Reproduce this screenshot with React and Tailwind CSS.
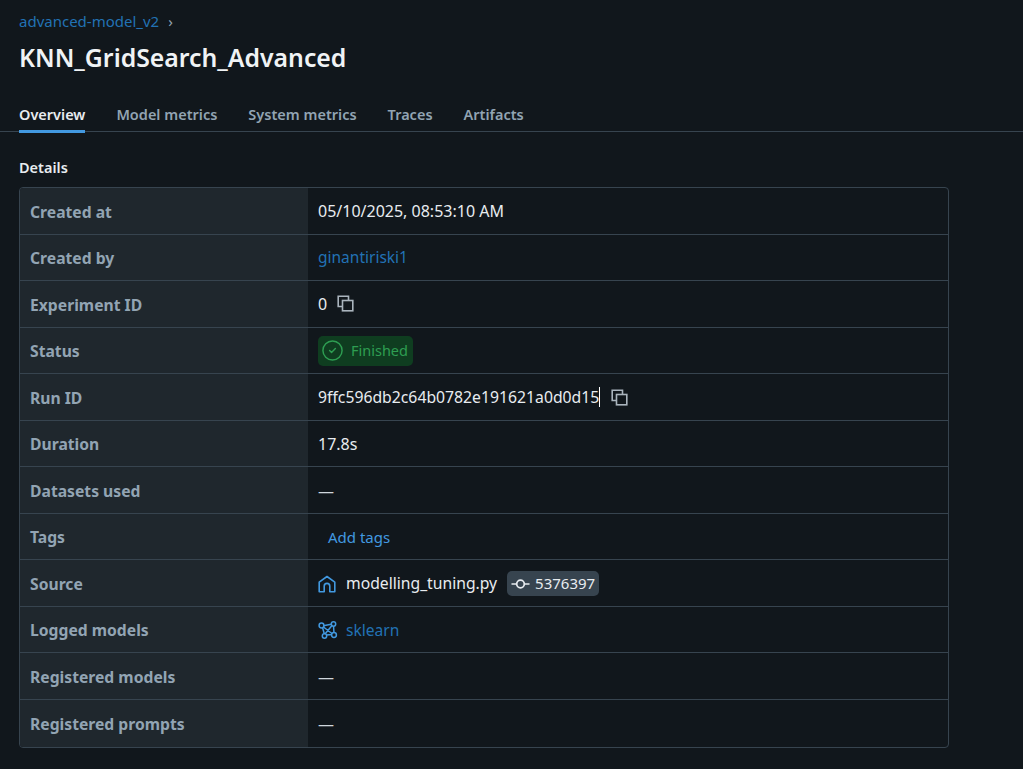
import { CircleCheck } from 'lucide-react'

const font = { fontFamily: '"Noto Sans", "Open Sans", sans-serif' }

function CopyIcon({ className }) {
  return (
    <svg viewBox="0 0 17 17" fill="none" stroke="#aab4bd" strokeWidth="1.6" className={className}>
      <path d="M5.5 11.5H1.2V1.2h10.3v4.3" />
      <rect x="5.5" y="5.5" width="10.3" height="10.3" />
    </svg>
  )
}

function HomeIcon() {
  return (
    <svg viewBox="0 0 18 18" fill="none" stroke="#4299e0" strokeWidth="1.6" className="w-[18px] h-[18px] shrink-0">
      <path d="M1.2 7.2 9 1.5l7.8 5.7v9.6h-5v-5.6a2.8 2.8 0 0 0-5.6 0v5.6h-5z" strokeLinejoin="round" />
    </svg>
  )
}

function CommitIcon() {
  return (
    <svg viewBox="0 0 20 14" fill="none" stroke="#e8ecf0" strokeWidth="1.8" className="w-[19px] h-[14px] shrink-0">
      <circle cx="10" cy="7" r="4" />
      <path d="M0.5 7H6M14 7h5.5" />
    </svg>
  )
}

function ModelIcon() {
  return (
    <svg viewBox="0 0 20 18" fill="none" stroke="#4299e0" strokeWidth="1.5" className="w-[20px] h-[18px] shrink-0">
      <path d="M4 5 14.5 3M4.5 6.5l2 7M5.5 6l9 7M15.5 4.5l.5 8M8 14l6.5-.5M7 13l7-8.5" />
      <circle cx="3.5" cy="4.5" r="2.4" fill="#11171c" />
      <circle cx="15.5" cy="3" r="2.2" fill="#11171c" />
      <circle cx="6.5" cy="15" r="2.2" fill="#11171c" />
      <circle cx="16" cy="14" r="2.4" fill="#11171c" />
    </svg>
  )
}

function Dash() {
  return <span className="mt-[1px] text-[#cfd6dc]">—</span>
}

const rows = [
  { label: 'Created at', value: <span>05/10/2025, 08:53:10 AM</span> },
  { label: 'Created by', value: <span className="text-[15.5px] text-[#2272b4]">ginantiriski1</span> },
  {
    label: 'Experiment ID',
    value: (
      <div className="flex items-center gap-[10px]">
        <span>0</span>
        <CopyIcon className="w-[17px] h-[17px] -mt-[2px]" />
      </div>
    ),
  },
  {
    label: 'Status',
    value: (
      <div className="flex items-center gap-[7px] h-[30px] pl-[3px] pr-[5px] rounded-[5px] bg-[#0f3d20] text-[#2e9e52]">
        <CircleCheck size={23} strokeWidth={1.5} />
        <span className="text-[14.5px]">Finished</span>
      </div>
    ),
  },
  {
    label: 'Run ID',
    value: (
      <div className="flex items-center gap-[11px]">
        <span className="text-[15.75px] border-r border-white leading-[20px]">9ffc596db2c64b0782e191621a0d0d15</span>
        <CopyIcon className="w-[17px] h-[17px]" />
      </div>
    ),
  },
  { label: 'Duration', value: <span>17.8s</span> },
  { label: 'Datasets used', value: <Dash /> },
  { label: 'Tags', value: <span className="pl-[10px] text-[15px] text-[#4299e0]">Add tags</span> },
  {
    label: 'Source',
    value: (
      <div className="flex items-center">
        <HomeIcon />
        <span className="ml-[10px] text-[15.7px]">modelling_tuning.py</span>
        <div className="ml-[10px] flex items-center gap-[5px] h-[25px] pl-[4px] pr-[4px] rounded-[5px] bg-[#37444f]">
          <CommitIcon />
          <span className="text-[15px]">5376397</span>
        </div>
      </div>
    ),
  },
  {
    label: 'Logged models',
    value: (
      <div className="flex items-center">
        <ModelIcon />
        <span className="ml-[8px] text-[15.6px] text-[#2272b4]">sklearn</span>
      </div>
    ),
  },
  { label: 'Registered models', value: <Dash /> },
  { label: 'Registered prompts', value: <Dash /> },
]

const tabs = ['Overview', 'Model metrics', 'System metrics', 'Traces', 'Artifacts']

export default function App() {
  return (
    <div className="h-[769px] overflow-hidden bg-[#11171c] text-[#e8ecf0]" style={font}>
      <div className="pl-[19px] pt-[10px]">
        <div className="flex items-center h-[22px] text-[15px] text-[#2272b4]">
          advanced-model_v2
          <span className="ml-[9px] text-[#92a4b3] text-[15px]">›</span>
        </div>
        <h1 className="mt-[7px] h-[36px] leading-[36px] text-[24.8px] font-semibold text-[#f0f3f5]">
          KNN_GridSearch_Advanced
        </h1>
      </div>

      <div className="mt-[25px] pl-[19px] flex gap-[31px] h-[32px] border-b border-[#37444f]">
        {tabs.map((tab, idx) => (
          <div
            key={tab}
            className={
              idx === 0
                ? 'h-[33px] leading-[28px] text-[14.5px] font-semibold text-[#e8ecf0] border-b-[3px] border-[#4299e0]'
                : 'h-[33px] leading-[28px] text-[14.5px] font-semibold text-[#92a4b3]'
            }
          >
            {tab}
          </div>
        ))}
      </div>

      <div className="pl-[19px] pt-[24px]">
        <h2 className="h-[22px] leading-[22px] text-[14.5px] font-semibold">Details</h2>
        <div className="mt-[9px] w-[930px] border border-[#37444f] rounded-[4px] overflow-hidden">
          {rows.map((row, idx) => (
            <div
              key={row.label}
              className={
                idx === rows.length - 1
                  ? 'flex h-[46.55px]'
                  : 'flex h-[46.55px] border-b border-[#37444f]'
              }
            >
              <div className="w-[288px] shrink-0 flex items-center pl-[10px] pt-[3px] bg-[#1f272d] text-[#92a4b3] text-[15.7px] font-bold">
                {row.label}
              </div>
              <div className="flex-1 flex items-center pl-[10px] pt-[1px] text-[16px]">{row.value}</div>
            </div>
          ))}
        </div>
      </div>
    </div>
  )
}
